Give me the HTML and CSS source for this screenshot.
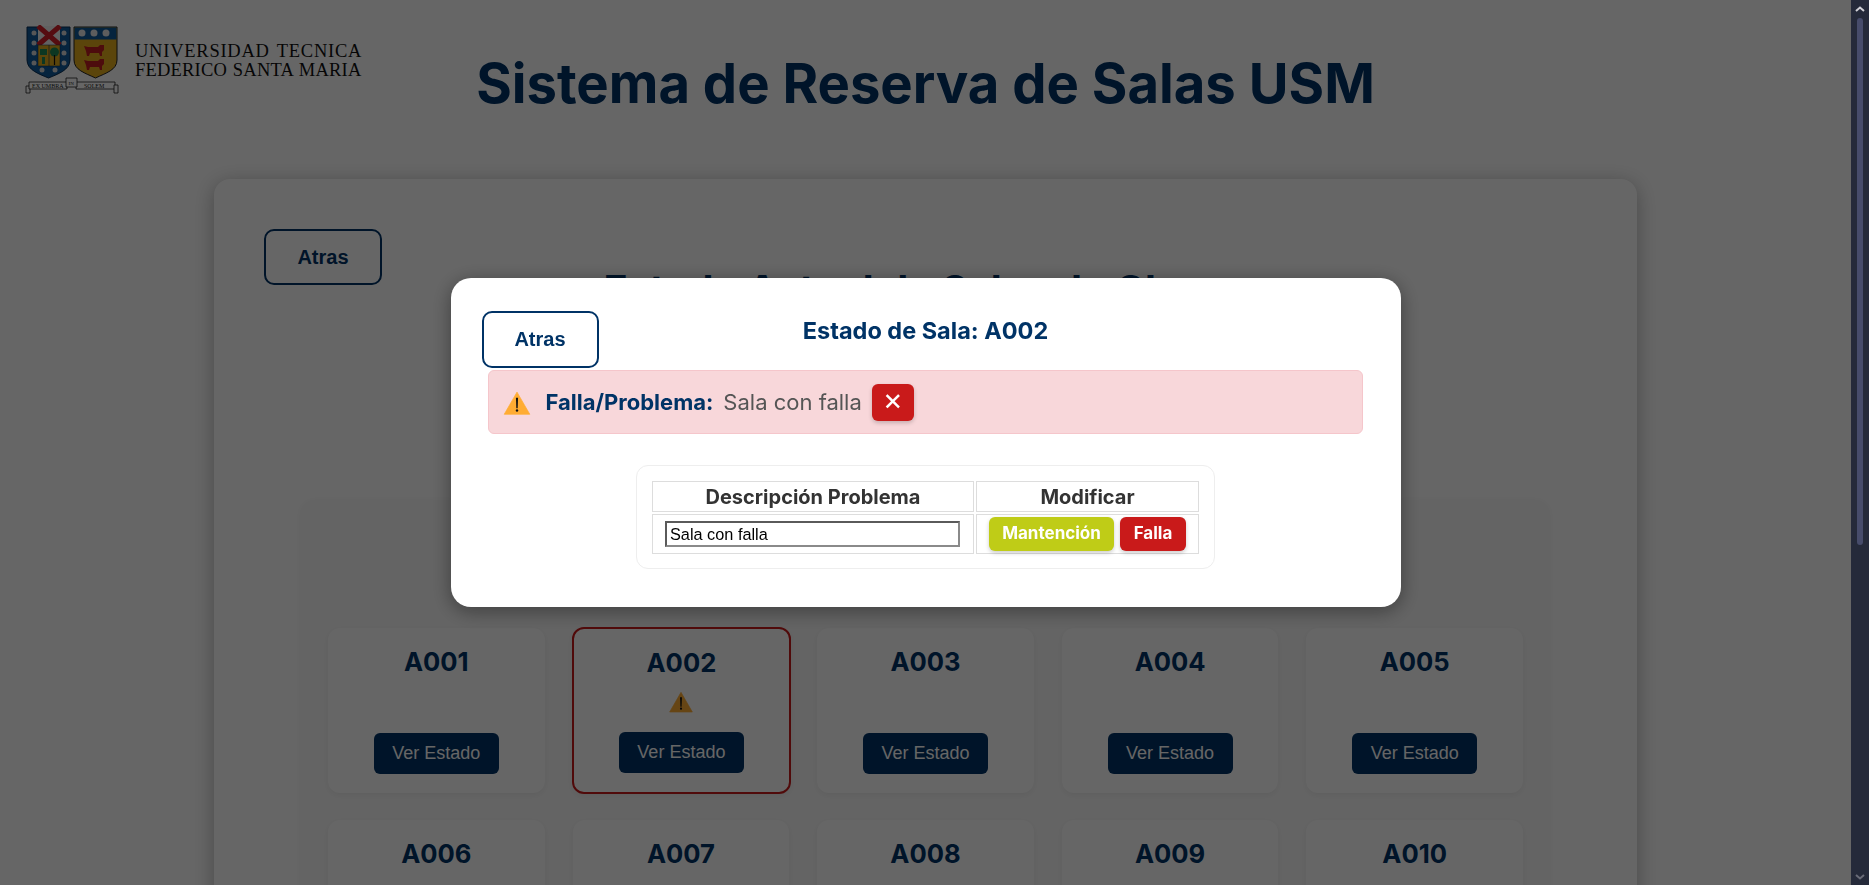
FILE: index.html
```html
<!DOCTYPE html>
<html lang="es">
<head>
<meta charset="utf-8">
<title>Sistema de Reserva de Salas USM</title>
<link rel="stylesheet" href="styles.css">
</head>
<body>
<svg class="defs" width="0" height="0" aria-hidden="true">
  <symbol id="warn" viewBox="0 0 36 32">
    <path d="M18 1.5 L35 31 H1 Z" fill="#ffac33" stroke="#ffac33" stroke-width="1" stroke-linejoin="round"/>
    <path d="M16.6 9h2.8l-.5 14h-1.800z" fill="#111"/>
    <circle cx="18" cy="26" r="1.600" fill="#111"/>
  </symbol>
</svg>
<div class="app">
  <main class="page">
    <header class="header">
      <div class="brand">
        <svg class="crest" viewBox="25 25 95 72" width="95" height="72">
          <path d="M27 27H70V60C70 70 58 74 48.500 78C39 74 27 70 27 60Z" fill="#0f5a9c" stroke="#0a2f55"/>
          <rect x="38" y="26" width="22" height="19" fill="#f2f2f2"/>
          <path d="M38 26L60 45M60 26L38 45" stroke="#d5202a" stroke-width="5"/>
          <rect x="38" y="45" width="22" height="21" fill="#e3ac1c" stroke="#0a2f55" stroke-width=".5"/>
          <path d="M49 45V66" stroke="#0a2f55" stroke-width=".6"/>
          <path d="M40 49h7v6h-7zM42 57h3v7h-3z" fill="#1f8a55"/>
          <circle cx="54.500" cy="52" r="4.500" fill="#1f8a55"/>
          <path d="M54.500 55V65" stroke="#111" stroke-width="1.200"/>
          <g fill="#d8d8d8">
            <circle cx="34" cy="33" r="2.500"/><circle cx="34" cy="43" r="2.500"/><circle cx="34" cy="53" r="2.500"/><circle cx="34" cy="63" r="2.500"/>
            <circle cx="64" cy="33" r="2.500"/><circle cx="64" cy="43" r="2.500"/><circle cx="64" cy="53" r="2.500"/><circle cx="64" cy="63" r="2.500"/>
            <circle cx="42" cy="70" r="2.500"/><circle cx="55" cy="70" r="2.500"/>
          </g>
          <path d="M74 27H117V60C117 70 106 73 95.500 78C85 73 74 70 74 60Z" fill="#e3ac1c" stroke="#222"/>
          <rect x="74.500" y="27.500" width="42" height="12" fill="#0f5a9c"/>
          <g fill="#e8e8e8">
            <circle cx="82" cy="33" r="3.500"/><circle cx="94" cy="33" r="3.500"/><circle cx="106" cy="33" r="3.500"/>
          </g>
          <path d="M84 46L88 47H98L100 45H104V50L102 52V56H100L99 53H90L89 56H87L86 51Z" fill="#c01f22"/>
          <path d="M84 60L88 61H98L100 59H104V64L102 66V70H100L99 67H90L89 70H87L86 65Z" fill="#c01f22"/>
          <g fill="#fff" stroke="#222" stroke-width=".8">
            <path d="M26 86H30V93H26Z"/>
            <path d="M29 82H67V89H29Z"/>
            <path d="M76 82H115V89H76Z"/>
            <path d="M114 85H118V93H114Z"/>
            <path d="M66 78H77V87H66Z"/>
          </g>
          <g class="crest-motto">
            <text x="32" y="87.800">EX UMBRA</text>
            <text x="68.500" y="84.500" class="crest-in">IN</text>
            <text x="84" y="87.800">SOLEM</text>
          </g>
        </svg>
        <div class="brand-name">
          <span class="brand-line-a">UNIVERSIDAD TECNICA</span>
          <span class="brand-line-b">FEDERICO SANTA MARIA</span>
        </div>
      </div>
      <h1 class="site-title">Sistema de Reserva de Salas USM</h1>
    </header>

    <section class="panel">
      <button class="btn-back">Atras</button>
      <h2 class="panel-title">Estado Actual de Salas de Clases</h2>
      <div class="rooms">
        <div class="room"><h3 class="room-name">A001</h3><button class="btn-view">Ver Estado</button></div>
        <div class="room room-alert"><h3 class="room-name">A002</h3><svg class="room-warn"><use href="#warn"/></svg><button class="btn-view">Ver Estado</button></div>
        <div class="room"><h3 class="room-name">A003</h3><button class="btn-view">Ver Estado</button></div>
        <div class="room"><h3 class="room-name">A004</h3><button class="btn-view">Ver Estado</button></div>
        <div class="room"><h3 class="room-name">A005</h3><button class="btn-view">Ver Estado</button></div>
        <div class="room"><h3 class="room-name">A006</h3><button class="btn-view">Ver Estado</button></div>
        <div class="room"><h3 class="room-name">A007</h3><button class="btn-view">Ver Estado</button></div>
        <div class="room"><h3 class="room-name">A008</h3><button class="btn-view">Ver Estado</button></div>
        <div class="room"><h3 class="room-name">A009</h3><button class="btn-view">Ver Estado</button></div>
        <div class="room"><h3 class="room-name">A010</h3><button class="btn-view">Ver Estado</button></div>
      </div>
    </section>

    <div class="overlay">
      <div class="modal">
        <div class="modal-top">
          <button class="btn-back btn-back-modal">Atras</button>
          <h2 class="modal-title">Estado de Sala: A002</h2>
        </div>
        <div class="alert">
          <svg class="alert-icon"><use href="#warn"/></svg>
          <strong class="alert-label">Falla/Problema:</strong>
          <span class="alert-text">Sala con falla</span>
          <button class="btn-close">✕</button>
        </div>
        <div class="table-box">
          <table class="problem-table">
            <thead>
              <tr><th class="col-desc">Descripción Problema</th><th class="col-mod">Modificar</th></tr>
            </thead>
            <tbody>
              <tr>
                <td class="cell-input"><input class="desc-input" type="text" value="Sala con falla"></td>
                <td class="cell-actions"><button class="btn-act btn-maint">Mantención</button><button class="btn-act btn-fail">Falla</button></td>
              </tr>
            </tbody>
          </table>
        </div>
      </div>
    </div>
  </main>
  <aside class="scrollbar" aria-hidden="true">
    <svg class="scroll-arrow" viewBox="0 0 10 7" width="10" height="7"><path d="M1 6L5 2.500L9 6" fill="none" stroke="#d0d0d6" stroke-width="2"/></svg>
    <div class="scroll-track"><div class="scroll-thumb"></div></div>
    <svg class="scroll-arrow" viewBox="0 0 10 7" width="10" height="7"><path d="M1 1L5 4.500L9 1" fill="none" stroke="#6a6c78" stroke-width="2"/></svg>
  </aside>
</div>
</body>
</html>
```
FILE: styles.css
```css
* { box-sizing: border-box; }

html, body {
  margin: 0;
  height: 100%;
  overflow: hidden;
  background: #fff;
  font-family: "Inter", "Liberation Sans", sans-serif;
}

.defs { position: absolute; }

.app {
  display: flex;
  height: 885px;
}

.page {
  flex: 1 1 auto;
  min-width: 0;
  overflow: hidden;
  position: relative;
}

/* Header */
.header {
  height: 179px;
  display: grid;
  grid-template-columns: 1fr auto 1fr;
  align-items: start;
  padding: 25px 0 0;
}

.brand {
  display: flex;
  align-items: flex-start;
  padding-left: 25px;
}

.crest { flex: none; display: block; }

.crest-motto text {
  font-family: "Liberation Serif", serif;
  font-size: 6px;
  fill: #222;
  stroke: none;
}
.crest-motto .crest-in { font-size: 5px; }

.brand-name {
  display: flex;
  flex-direction: column;
  margin: 17px 0 0 15px;
  font-family: "Liberation Serif", serif;
  font-size: 18.500px;
  line-height: 19px;
  color: #111;
  white-space: nowrap;
}
.brand-line-a { letter-spacing: .75px; word-spacing: 2px; }
.brand-line-b { letter-spacing: .2px; word-spacing: 1px; }

.site-title {
  grid-column: 2;
  margin: 22px 0 0;
  font-size: 54.400px;
  line-height: 72px;
  font-weight: 700;
  color: #003366;
  white-space: nowrap;
}

/* Panel */
.panel {
  width: 1423px;
  margin: 0 auto;
  padding: 50px 50px 40px;
  background: #fff;
  border-radius: 16px;
  box-shadow: 0 4px 20px rgba(0, 0, 0, .3);
}

.btn-back {
  display: block;
  width: 118px;
  height: 56px;
  background: #fff;
  border: 2px solid #003366;
  border-radius: 10px;
  font-family: "Liberation Sans", sans-serif;
  font-size: 20px;
  font-weight: 700;
  color: #003366;
}

.panel-title {
  margin: -25px 0 0;
  font-size: 40px;
  line-height: 60px;
  font-weight: 700;
  color: #003366;
  text-align: center;
}

.rooms {
  margin: 180px 0 0 38px;
  width: 1246px;
  padding: 128px 25px 25px 26px;
  display: grid;
  grid-template-columns: repeat(5, 1fr);
  gap: 27px 28px;
  background: #fafafa;
  border-radius: 12px;
  box-shadow: 0 2px 8px rgba(0, 0, 0, .06);
}

.room {
  height: 165px;
  padding-top: 16px;
  display: flex;
  flex-direction: column;
  align-items: center;
  background: #fff;
  border-radius: 12px;
  box-shadow: 0 2px 6px rgba(0, 0, 0, .06);
}

.room-name {
  margin: 0;
  font-size: 25.600px;
  line-height: 36px;
  font-weight: 700;
  color: #003366;
}

.btn-view {
  margin-top: auto;
  margin-bottom: 19px;
  width: 125px;
  height: 41px;
  border: 0;
  border-radius: 6px;
  background: #003366;
  color: #fff;
  font-family: "Liberation Sans", sans-serif;
  font-size: 18px;
}

.room-alert {
  margin: -1px -2px -1px -1px;
  height: 167px;
  border: 2px solid #c91a1a;
  padding-top: 16px;
}

.room-warn {
  margin-top: 10px;
  width: 24px;
  height: 22px;
}

/* Modal */
.overlay {
  position: fixed;
  top: 0;
  left: 0;
  right: 18px;
  bottom: 0;
  display: flex;
  align-items: center;
  justify-content: center;
  background: rgba(0, 0, 0, .6);
}

.modal {
  width: 950px;
  height: 329px;
  padding: 33px 37px 0;
  background: #fff;
  border-radius: 20px;
  box-shadow: 0 4px 20px rgba(0, 0, 0, .4);
}

.modal-top {
  display: grid;
  grid-template-columns: 117px 1fr 117px;
  margin: 0 -6px;
  height: 59px;
}

.btn-back-modal { width: 117px; height: 57px; }

.modal-title {
  margin: 0;
  font-size: 23.500px;
  line-height: 40px;
  font-weight: 700;
  color: #003366;
  text-align: center;
}

.alert {
  width: 875px;
  height: 64px;
  padding-left: 14px;
  display: flex;
  align-items: center;
  background: #f8d7da;
  border: 1px solid #f5c6cb;
  border-radius: 6px;
}

.alert-icon { width: 28px; height: 24px; flex: none; margin-top: 2px; }

.alert-label {
  margin-left: 15px;
  font-size: 22px;
  font-weight: 700;
  color: #003366;
}

.alert-text {
  margin-left: 10px;
  font-size: 22px;
  color: #555;
}

.btn-close {
  margin-left: 10px;
  width: 42px;
  height: 37px;
  padding: 0;
  border: 0;
  border-radius: 6px;
  background: #c91a1a;
  color: #fff;
  font-size: 24px;
  font-weight: 700;
  font-family: "DejaVu Sans", sans-serif;
  box-shadow: 0 2px 4px rgba(0, 0, 0, .2);
}

.table-box {
  width: 579px;
  height: 104px;
  margin: 31px auto 0;
  padding: 15px 15px;
  border: 1px solid #eee;
  border-radius: 12px;
}

.problem-table {
  width: 547px;
  border-collapse: separate;
  border-spacing: 2px;
  margin: -2px;
  table-layout: fixed;
}

.problem-table th,
.problem-table td {
  border: 1px solid #ddd;
  padding: 0;
  color: #333;
}

.problem-table th {
  height: 31px;
  font-size: 20px;
  font-weight: 700;
  text-align: center;
}

.col-desc { width: 322px; }
.col-mod { width: 223px; }

.cell-input { height: 40px; padding-left: 12px !important; }

.desc-input {
  display: block;
  width: 295px;
  height: 26px;
  padding: 1px 3px;
  border-width: 2px;
  border-style: solid;
  border-color: #5a5a5a #8a8a8a #8a8a8a #5a5a5a;
  font-family: "Liberation Sans", sans-serif;
  font-size: 16.300px;
  color: #000;
  background: #fff;
}

.cell-actions { text-align: center; }

.btn-act {
  height: 34px;
  padding: 0 0 2px;
  border: 0;
  border-radius: 6px;
  color: #fff;
  font-family: "Inter", sans-serif;
  font-size: 17px;
  font-weight: 700;
  box-shadow: 0 2px 4px rgba(0, 0, 0, .2);
  vertical-align: middle;
}

.btn-maint { width: 125px; background: #bfcc17; }
.btn-fail { width: 66px; margin-left: 6px; background: #c91a1a; }

/* Browser scrollbar */
.scrollbar {
  flex: 0 0 18px;
  display: flex;
  flex-direction: column;
  align-items: center;
  padding: 5px 0 4px;
  background: #252a3a;
}

.scroll-arrow { flex: none; }

.scroll-track {
  flex: 1 1 auto;
  width: 100%;
  padding-top: 6px;
  display: flex;
  justify-content: center;
}

.scroll-thumb {
  width: 6px;
  height: 527px;
  background: #474c6b;
  border-radius: 3px;
}
```
